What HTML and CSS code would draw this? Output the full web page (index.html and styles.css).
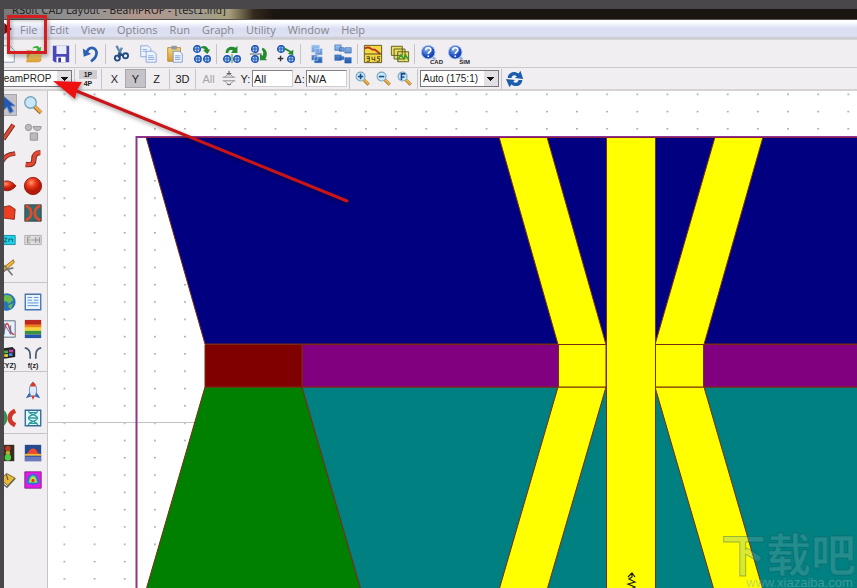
FILE: index.html
```html
<!DOCTYPE html>
<html lang="en">
<head>
<meta charset="utf-8">
<title>RSoft CAD Layout</title>
<link rel="stylesheet" href="styles.css">
</head>
<body>
<svg class="defs" aria-hidden="true">
  <defs>
    <linearGradient id="blue" x2="0" y2="1"><stop stop-color="#9cc4f0"/><stop offset="1" stop-color="#1f58ae"/></linearGradient>
    <linearGradient id="gold" x2="0" y2="1"><stop stop-color="#f6d878"/><stop offset="1" stop-color="#d89a2c"/></linearGradient>
    <radialGradient id="ball" cx=".4" cy=".3"><stop stop-color="#ff9a70"/><stop offset=".5" stop-color="#ee3a1c"/><stop offset="1" stop-color="#b81808"/></radialGradient>
    <radialGradient id="help" cx=".4" cy=".3"><stop stop-color="#8ab4f4"/><stop offset="1" stop-color="#1a48b8"/></radialGradient>
    <symbol id="node" viewBox="0 0 10 10"><circle cx="5" cy="5" r="4" fill="#b8d4f4" stroke="#1c56b4" stroke-width="1.8"/><path d="M5 1v8M1 5h8" stroke="#1c56b4" stroke-width="1.3"/></symbol>
    <symbol id="lens" viewBox="0 0 22 22"><path d="M12 12l7 7" stroke="#9a6a28" stroke-width="4"/><path d="M12.500 12l6.500 6.500" stroke="#f0b048" stroke-width="2.500"/><circle cx="8.500" cy="8.500" r="5.800" fill="#c8e8fa" stroke="#7aa4bc" stroke-width="1.400"/></symbol>
    <symbol id="qmark" viewBox="0 0 22 22"><circle cx="9" cy="9" r="7.500" fill="url(#help)" stroke="#b4c8ec"/><path d="M6.300 7c0-4 5.600-3.600 5.600-.3 0 2-2.800 2-2.800 4.300M9.100 12.600v1.700" fill="none" stroke="#fff" stroke-width="1.800"/><path d="M14 15l3 2" stroke="#9ab0d8" stroke-width="3"/></symbol>
  </defs>
</svg>

<div class="window">
  <header class="titlebar"><span class="caption">RSoft CAD Layout - BeamPROP - [test1.ind]</span></header>

  <nav class="menubar">
    <svg class="doc-mark" viewBox="0 0 10 14"><path d="M0 0l9 7-9 6z" fill="#751010"/></svg>
    <a href="#">File</a><a href="#">Edit</a><a href="#">View</a><a href="#">Options</a><a href="#">Run</a><a href="#">Graph</a><a href="#">Utility</a><a href="#">Window</a><a href="#">Help</a>
  </nav>

  <div class="toolbar main-tools">
    <button aria-label="New"><svg viewBox="0 0 22 22"><path d="M3 2h11l5 5v13H3z" fill="#fff" stroke="#8494b4"/></svg></button>
    <button aria-label="Open"><svg viewBox="0 0 22 22"><path d="M3 7h6l2 2h8v10H3z" fill="#d6a344"/><path d="M7 11h13l-3 9H2z" fill="url(#gold)"/><path d="M9 5c3-4 7-3 8-1l2-1-1 6-5-2 2-1c-1-2-3-2-6-1z" fill="#3fae38"/></svg></button>
    <button aria-label="Save"><svg viewBox="0 0 22 22"><path d="M2 2h18v18H4l-2-2z" fill="#4a48b8"/><path d="M6 2h11v9H6z" fill="#e8ecfa"/><path d="M6 14h10v6H6z" fill="#fff"/><path d="M8 15h3v5H8z" fill="#3836a0"/></svg></button>
    <i class="sep"></i>
    <button aria-label="Undo"><svg viewBox="0 0 22 22"><path d="M6 10C9 1 18 4 17 11c-.5 4-3 6-6 8" fill="none" stroke="#2c60b4" stroke-width="3"/><path d="M2 5l1 9 8-3z" fill="#2c60b4"/></svg></button>
    <i class="sep"></i>
    <button aria-label="Cut"><svg viewBox="0 0 22 22"><path d="M6 2l6 11M12 4L8 13" stroke="#5a86ac" stroke-width="2.500"/><circle cx="7" cy="15.500" r="2.800" fill="none" stroke="#204a80" stroke-width="2"/><circle cx="16" cy="13" r="2.800" fill="none" stroke="#204a80" stroke-width="2"/><path d="M8 10l6 3M11 12l-3 3" stroke="#204a80" stroke-width="2"/></svg></button>
    <button aria-label="Copy"><svg viewBox="0 0 22 22"><g fill="#eef4fe" stroke="#86a2d6"><path d="M3 2h8l3 3v9H3z"/><path d="M9 8h8l3 3v9H9z"/></g><path d="M5 6h5M5 8h4M11 13h6M11 15h7M11 17h7" stroke="#86a8de"/></svg></button>
    <button aria-label="Paste"><svg viewBox="0 0 22 22"><path d="M3 4h14v15H3z" fill="url(#gold)" stroke="#b98935"/><path d="M7 2h6v4H7z" fill="#8a98a8"/><path d="M9 8h7l3 3v9H9z" fill="#f2f7ff" stroke="#7997cd"/><path d="M11 13h6M11 15h6M11 17h6" stroke="#7d9ed6"/></svg></button>
    <button aria-label="Duplicate"><svg viewBox="0 0 22 22"><use href="#node" x="1" y="1" width="9" height="9"/><use href="#node" x="2" y="12" width="9" height="9"/><use href="#node" x="12" y="12" width="9" height="9"/><path d="M10 3c4-2 7 0 8 3h2l-3 5-5-4h2c0-2-2-3-4-2z" fill="#258b30"/></svg></button>
    <i class="sep"></i>
    <button aria-label="Rotate"><svg viewBox="0 0 22 22"><use href="#node" x="1" y="12" width="9" height="9"/><use href="#node" x="12" y="12" width="9" height="9"/><path d="M4 10c0-7 7-8 11-6l2-2v8h-7l2-3c-3-1-5 0-5 3z" fill="#258b30"/><path d="M11 11v10" stroke="#258b30"/></svg></button>
    <button aria-label="Flip"><svg viewBox="0 0 22 22"><use href="#node" x="2" y="1" width="9" height="9"/><use href="#node" x="2" y="12" width="9" height="9"/><path d="M1 11h13" stroke="#555"/><path d="M15 4c5 2 6 8 3 12l2 2h-8v-7l3 2c1-3 1-5-1-7z" fill="#258b30"/></svg></button>
    <button aria-label="Move copy"><svg viewBox="0 0 22 22"><use href="#node" x="1" y="1" width="9" height="9"/><use href="#node" x="12" y="12" width="9" height="9"/><path d="M10 4l7 4 2-2v6l-6-1 2-2-6-3z" fill="#258b30"/><path d="M5 13v6M2 16h6" stroke="#333" stroke-width="1.500"/></svg></button>
    <i class="sep"></i>
    <button aria-label="Arrange"><svg viewBox="0 0 22 22"><g fill="url(#blue)" stroke="#c8dcf4" stroke-width=".6"><path d="M10 5h8v7h-8zM6 1h9v8H6zM6 12h7v6H6zM9 14h9v7H9z"/></g></svg></button>
    <button aria-label="Group"><svg viewBox="0 0 22 22"><g fill="url(#blue)" stroke="#1d56aa" stroke-width=".6"><path d="M2 1h7v6H2zM7 4h5v4H7zM13 4h7v6h-7zM2 12h7v6H2zM8 14h4v3H8zM13 15h7v6h-7z"/></g></svg></button>
    <i class="sep"></i>
    <button aria-label="Symbol table"><svg viewBox="0 0 22 22"><path d="M1.500 1.500h19v19h-19z" fill="#f4d940" stroke="#5b5020"/><path d="M2 5c6-4 7 3 11 1l6 5" fill="none" stroke="#b43426" stroke-width="2"/><path d="M2 11h18M4 14h3v5H4M4 16h3M10 14v3h3M13 14v5M19 14h-3v2h2v3h-3" fill="none" stroke="#4a4020"/></svg></button>
    <button aria-label="Layers"><svg viewBox="0 0 22 22"><g fill="#eadd62" stroke="#58581e"><path d="M1.500 2.500h12v10h-12zM4.500 5.500h12v11h-12zM8.500 8.500h12v11h-12z"/></g><path d="M9 17l3-5 3 4 2-4 3 5" fill="none" stroke="#2a9c2e" stroke-width="1.500"/></svg></button>
    <i class="sep"></i>
    <button class="help" aria-label="CAD help"><svg viewBox="0 0 22 22"><use href="#qmark"/></svg><small>CAD</small></button>
    <button class="help" aria-label="Simulation help"><svg viewBox="0 0 22 22"><use href="#qmark"/></svg><small>SIM</small></button>
  </div>

  <div class="toolbar view-tools">
    <select class="combo engine" aria-label="Simulation tool"><option>BeamPROP</option></select>
    <i class="sep"></i>
    <button class="panes" aria-label="Panes"><b>1P</b><b>4P</b></button>
    <i class="sep"></i>
    <button class="axis">X</button><button class="axis pressed">Y</button><button class="axis">Z</button>
    <i class="sep"></i>
    <button class="axis">3D</button>
    <i class="sep"></i>
    <button class="axis off">All</button>
    <button class="spin" aria-label="Step slice"><svg viewBox="0 0 18 20"><path d="M2 8h14M2 12h14" stroke="#888"/><path d="M9 1v5M6.500 4h5M7 16h4" stroke="#333"/><path d="M4 8l5-4 5 4M4 12l5 5 5-5" fill="none" stroke="#888"/></svg></button>
    <label for="slice">Y:</label><input id="slice" value="All">
    <label for="delta">Δ:</label><input id="delta" value="N/A">
    <i class="sep"></i>
    <button class="zoom" aria-label="Zoom in"><svg viewBox="0 0 22 22"><use href="#lens"/><path d="M5 8.500h7M8.500 5v7" stroke="#164a8c" stroke-width="2"/></svg></button>
    <button class="zoom" aria-label="Zoom out"><svg viewBox="0 0 22 22"><use href="#lens"/><path d="M5 8.500h7" stroke="#164a8c" stroke-width="2"/></svg></button>
    <button class="zoom" aria-label="Zoom full"><svg viewBox="0 0 22 22"><use href="#lens"/><path d="M7 13V5h5M7 9h4" fill="none" stroke="#164a8c" stroke-width="2"/></svg></button>
    <i class="sep"></i>
    <select class="combo scale" aria-label="Aspect ratio"><option>Auto (175:1)</option></select>
    <i class="sep"></i>
    <button class="refresh" aria-label="Refresh"><svg viewBox="0 0 22 22"><path d="M3 10c0-6 7-9 12-5l2-3 3 9-9-1 2-2c-3-2-5-1-6 2zM19 12c0 6-7 9-12 5l-2 3-4-9 10 1-2 2c3 2 5 1 6-2z" fill="#1b5daa"/></svg></button>
  </div>

  <main class="workspace">
    <aside class="palette">
      <div class="tools">
        <button class="pressed" aria-label="Select"><svg viewBox="0 0 22 22"><path d="M7 1v16l4-4 3 7 4-2-3-6h5z" fill="#2458b0" stroke="#5f88c4"/></svg></button>
        <button aria-label="Zoom"><svg viewBox="0 0 22 22"><use href="#lens" x="-1" y="-1" width="24" height="24"/></svg></button>
        <button aria-label="Straight segment"><svg viewBox="0 0 22 22"><path d="M7 19L18 3" stroke="#74281c" stroke-width="5"/><path d="M7 19L18 3" stroke="#e04a34" stroke-width="3"/></svg></button>
        <button aria-label="Components"><svg viewBox="0 0 22 22"><g fill="#bbb" stroke="#929292"><circle cx="6" cy="6" r="3.500"/><path d="M11 5h9c0 6-8 6-9 0zM8 12h8v8H8z"/></g></svg></button>
        <button aria-label="Arc segment"><svg viewBox="0 0 22 22"><path d="M5 15C8 8 12 6 20 5" fill="none" stroke="#79342c" stroke-width="5"/><path d="M5 15C8 8 12 6 20 5" fill="none" stroke="#df4634" stroke-width="3"/></svg></button>
        <button aria-label="S-bend"><svg viewBox="0 0 22 22"><path d="M3 17c8 1 9-2 9-6s2-7 7-7" fill="none" stroke="#75291c" stroke-width="6"/><path d="M3 17c8 1 9-2 9-6s2-7 7-7" fill="none" stroke="#e34631" stroke-width="4"/></svg></button>
        <button aria-label="Lens"><svg viewBox="0 0 22 22"><path d="M2 11c5-8 13-7 19 0-6 7-14 7-19 0z" fill="url(#ball)" stroke="#8c2014"/></svg></button>
        <button aria-label="Circle"><svg viewBox="0 0 22 22"><circle cx="11" cy="11" r="9.500" fill="url(#ball)" stroke="#8c2014"/></svg></button>
        <button aria-label="Polygon"><svg viewBox="0 0 22 22"><path d="M3 5l11-2 6 4-1 11-16-2z" fill="#ec3e20" stroke="#8c2014"/></svg></button>
        <button aria-label="Coupler"><svg viewBox="0 0 22 22"><path d="M2 2h18v18H2z" fill="#2a6e70" stroke="#44383c"/><path d="M3 3c8 3 8 13 0 16M19 3c-8 3-8 13 0 16" fill="none" stroke="#e9482c" stroke-width="3"/></svg></button>
        <button aria-label="Impedance"><svg viewBox="0 0 22 22"><path d="M2 6h18v10H2z" fill="#20cfe4" stroke="#148ba4"/><path d="M8 9h3l-3 4h3M13 13v-3h4v3" fill="none" stroke="#165970"/></svg></button>
        <button aria-label="Fields"><svg viewBox="0 0 22 22"><path d="M2 6h18v10H2z" fill="#ddd" stroke="#aaa"/><path d="M8 8H5v6h3M5 11h3M9 11h5M14 8v6M18 8v6M14 11h4" fill="none" stroke="#999" stroke-width="1.300"/></svg></button>
        <button aria-label="Edit tools"><svg viewBox="0 0 22 22"><path d="M4 14L18 3l1 3L7 17z" fill="#f0b637" stroke="#98691c"/><path d="M8 9l9 11M6 15l12-3" stroke="#777" stroke-width="1.800"/></svg></button>
      </div>
      <div class="tools">
        <button aria-label="Global settings"><svg viewBox="0 0 22 22"><circle cx="11" cy="11" r="9.500" fill="#2774bd"/><path d="M9 3l6 1 3 5-5 4-3-3-5 1zM12 15l6-3-3 7z" fill="#6cbd48"/></svg></button>
        <button aria-label="Symbols"><svg viewBox="0 0 22 22"><path d="M2.500 2.500h17v17h-17z" fill="#eaf4ff" stroke="#4a74ad" stroke-width="1.500"/><path d="M5 6h5M12 6h5M5 9h5M12 9h5M5 12h12M5 15h12" stroke="#4b8dd4"/></svg></button>
        <button aria-label="Index profile"><svg viewBox="0 0 22 22"><path d="M2 2h18v18H2z" fill="#e7f0fb" stroke="#567"/><path d="M4 18c5 0 4-13 7-13s2 12 8 12" fill="none" stroke="#d84032" stroke-width="1.800"/><path d="M8 17V5l7 12V7" fill="none" stroke="#406bb9"/></svg></button>
        <button aria-label="Layer table"><svg viewBox="0 0 22 22"><path d="M2 1h18v6H2z" fill="#bb281f"/><path d="M2 6h18v4H2z" fill="#ee7c20"/><path d="M2 9h18v4H2z" fill="#f3d33c"/><path d="M2 13h18v4H2z" fill="#38943c"/><path d="M2 17h18v4H2z" fill="#2453a8"/></svg></button>
        <button aria-label="Material"><svg viewBox="0 0 22 22"><path d="M5 3l12-2 3 3v8L8 14z" fill="#222"/><path d="M8 5h4v3H8z" fill="#50bd42"/><path d="M13 4h5v3h-5z" fill="#c63ab4"/><path d="M13 8h4v3h-4z" fill="#3b8ce2"/><path d="M8 9h4v3H8z" fill="#edcf36"/></svg><small>(XYZ)</small></button>
        <button aria-label="Taper"><svg viewBox="0 0 22 22"><path d="M2 2c6 1 6 6 6 12M20 2c-6 1-6 6-6 12" fill="none" stroke="#465673" stroke-width="1.800"/></svg><small>f(z)</small></button>
      </div>
      <div class="tools">
        <span></span>
        <button aria-label="Launch"><svg viewBox="0 0 22 22"><path d="M8 11l-5 8 6-2zM14 11l5 8-6-2z" fill="#3569b8"/><path d="M11 1c6 6 4 12 2 16H9C7 13 5 7 11 1z" fill="#dceafa" stroke="#668bbb"/><path d="M11 1c3 2 3 5 3 5H8s0-3 3-5zM9 16h4l-2 5z" fill="#dc3b22"/></svg></button>
        <button aria-label="Pathways"><svg viewBox="0 0 22 22"><path d="M5 3c6 4 6 12 0 16" fill="none" stroke="#329352" stroke-width="4"/><path d="M20 3c-8 4-8 12 0 16" fill="none" stroke="#cf3528" stroke-width="5"/></svg></button>
        <button aria-label="Monitors"><svg viewBox="0 0 22 22"><path d="M2.500 2.500h17v17h-17z" fill="#e6f7fb" stroke="#35699b" stroke-width="1.500"/><path d="M6 3c0 5 10 4 10 8s-10 3-10 8M16 3c0 5-10 4-10 8s10 3 10 8M7 5h8M7 11h8M7 17h8" fill="none" stroke="#2c9b9b" stroke-width="1.400"/></svg></button>
      </div>
      <div class="tools">
        <button aria-label="Run simulation"><svg viewBox="0 0 22 22"><path d="M3 2h16v18H3z" fill="#362e20"/><circle cx="12" cy="6" r="3" fill="#c33821"/><circle cx="12" cy="11" r="2.500" fill="#bdab31"/><circle cx="12" cy="16" r="3.500" fill="#4bcf45"/></svg></button>
        <button aria-label="Mode profile"><svg viewBox="0 0 22 22"><path d="M2 2h18v18H2z" fill="#27498f"/><path d="M2 15h18v5H2z" fill="#6b78bb"/><path d="M3 12c4 0 3-6 8-6s4 6 8 6z" fill="#ef492c"/><path d="M2 12h18v2H2z" fill="#ecba41"/></svg></button>
        <button aria-label="Scan"><svg viewBox="0 0 22 22"><path d="M3 10l8-6 9 5-8 8z" fill="#e8b934" stroke="#76602a"/><path d="M5 14l6 5 9-10M10 4l2 7" fill="none" stroke="#68635c" stroke-width="1.500"/></svg></button>
        <button aria-label="Contour"><svg viewBox="0 0 22 22"><path d="M2 2h18v18H2z" fill="#e916e8" stroke="#7f2687"/><path d="M4 14C5 5 9 4 11 4s6 1 7 10c-3 3-11 3-14 0z" fill="#326be0"/><path d="M6 14c1-6 3-8 5-8s4 2 5 8z" fill="#5be05d"/><path d="M8 13c0-4 2-5 3-5s3 1 3 5z" fill="#f1e332"/><circle cx="11" cy="11.500" r="1.800" fill="#dc3822"/></svg></button>
      </div>
    </aside>

    <svg class="canvas" viewBox="48 91 809 497" preserveAspectRatio="xMinYMin slice">
      <defs><pattern id="grid" x="63.500" y="93.500" width="30.150" height="17.310" patternUnits="userSpaceOnUse"><path d="M0 0h1.800v1.400H0z" fill="#a0a0a0"/></pattern></defs>
      <path d="M48 91h809v497H48z" fill="#fff"/>
      <path d="M48 91h809v497H48z" fill="url(#grid)"/>
      <path d="M48 422.500h150" stroke="#c2c2c2"/>
      <g stroke="#7a2b10" stroke-width="1">
        <path d="M146 137H860V344H205z" fill="#000080"/>
        <path d="M205 387H302L361 590H146z" fill="#008000"/>
        <path d="M302 387H860V590H361z" fill="#008080"/>
        <path d="M302 344.500H860V387H302z" fill="#800080"/>
        <path d="M205 344.500H302V387H205z" fill="#800000"/>
        <g fill="#ff0">
          <path d="M499 137H547L606 344.500H558z"/>
          <path d="M715 137H763L704 344.500H655z"/>
          <path d="M558 387H606L547 590H499z"/>
          <path d="M655 387H704L763 590H714z"/>
          <path d="M558.500 344.500H606V387H558.500zM655.500 344.500H703.500V387H655.500z"/>
          <path d="M606.500 137H655.500V592H606.500z"/>
        </g>
      </g>
      <path d="M136.500 590V137H860" fill="none" stroke="#8d3590" stroke-width="2"/>
      <path d="M146 137.500H860" stroke="#85204a"/>
      <path d="M628 577l4-4 3 4M632 574v3l-3 2 6 3-7 2 7 3-6 3" fill="none" stroke="#1c1c00" stroke-width="1.200"/>
      <g class="watermark">
        <text x="721" y="572" font-size="45">下载吧</text>
        <text class="site" x="746" y="587" font-size="13">www.xiazaiba.com</text>
      </g>
    </svg>
  </main>

  <svg class="callout" viewBox="0 0 380 230" aria-hidden="true">
    <path d="M8.500 16.500h37v36h-37z" fill="none" stroke="#d61d1f" stroke-width="3"/>
    <path d="M347 201L74 90" stroke="#c9151a" stroke-width="3" stroke-linecap="round"/>
    <path d="M53 81l29 1-5 8-2 9z" fill="#ee1111"/>
  </svg>
</div>
</body>
</html>
```

FILE: styles.css
```css
* { box-sizing: border-box; }

body {
  margin: 0;
  padding: 9px 0 0 4px;
  background: #4a474a;
  font: 11px "Liberation Sans", sans-serif;
  color: #222;
  overflow: hidden;
}

.defs { position: absolute; width: 0; height: 0; }

.window { overflow: hidden; background: #f0eef1; }

.titlebar {
  display: flex;
  align-items: center;
  height: 11px;
  overflow: hidden;
  background: linear-gradient(90deg, #777a78, #8e8f90 60px, #9c9691 100px, #b4978c 140px, #a09c92 190px, #a8a07c 225px, #33291c 250px, #1b1511 270px);
  border-bottom: 1px solid #55504e;
}
.caption {
  padding-left: 8px;
  font: 11px/12px "DejaVu Sans Condensed", "Open Sans", sans-serif;
  margin-top: -6px;
  white-space: nowrap;
}

.menubar {
  display: flex;
  align-items: center;
  gap: 12px;
  height: 20px;
  padding-bottom: 2px;
  background: linear-gradient(#fff 2px, #eceefa 5px, #d9def0 9px, #dfe1f2 16px, #c9c9cf 18px, #d8d7da);
  font: 11px "Open Sans", sans-serif;
}
.menubar a { color: #85868e; text-decoration: none; }
.doc-mark { width: 9px; height: 12px; margin-right: -5px; }

button {
  display: flex;
  align-items: center;
  justify-content: center;
  flex: none;
  padding: 0;
  border: 0;
  background: none;
  font: inherit;
  color: inherit;
}

.toolbar { display: flex; align-items: center; }
.sep { flex: none; width: 1px; height: 20px; margin: 0 1px; background: #c6c4c8; }

.main-tools {
  height: 28px;
  margin-left: -11px;
  border-bottom: 1px solid #cbc9cc;
}
.main-tools button { width: 27px; height: 27px; position: relative; }
.main-tools svg { width: 20px; height: 20px; }
.main-tools small {
  position: absolute;
  right: 0;
  bottom: 2px;
  font: bold 6px "Liberation Sans", sans-serif;
}

.view-tools {
  height: 23px;
  border-bottom: 2px solid #d6d4d2;
}
.view-tools .sep { margin: 0 2px; }

.combo {
  --arrow: 6px;
  appearance: none;
  flex: none;
  height: 17px;
  border: 1px solid #77777b;
  border-radius: 0;
  padding: 0 2px;
  color: #222;
  background:
    linear-gradient(#111, #111) right var(--arrow) top 6px / 7px 1px no-repeat,
    linear-gradient(#111, #111) right calc(var(--arrow) + 1px) top 7px / 5px 1px no-repeat,
    linear-gradient(#111, #111) right calc(var(--arrow) + 2px) top 8px / 3px 1px no-repeat,
    linear-gradient(#111, #111) right calc(var(--arrow) + 3px) top 9px / 1px 1px no-repeat,
    linear-gradient(#e2e0e4, #e2e0e4) right / 14px 100% no-repeat,
    #fff;
}
.engine { --arrow: 3px; width: 78px; margin-left: -10px; font: 10px "Liberation Sans", sans-serif; }
.scale { --arrow: 4px; width: 79px; font: 10px "Liberation Sans", sans-serif; }

.panes { flex-direction: column; width: 22px; font-size: 7px; line-height: 9px; }
.panes b { width: 18px; }
.panes b:first-child { background: #cfcdd1; }

.axis { width: 21px; height: 19px; }
.axis.off { color: #a4a3a7; }
.pressed { background: #c5c3c8; outline: 1px solid #a9a7ad; outline-offset: -1px; }

.spin { width: 20px; }
.spin svg { width: 18px; height: 18px; }

.toolbar label { width: 13px; text-align: center; }
.toolbar input {
  width: 41px;
  height: 17px;
  padding: 0 1px;
  border: 1px solid #d0ced2;
  border-top-color: #838287;
  border-left-color: #838287;
  background: #fff;
  color: #222;
  font: inherit;
}

.zoom { width: 21px; }
.zoom svg { width: 17px; height: 17px; }
.refresh { width: 22px; }
.refresh svg { width: 20px; height: 20px; }

.workspace { display: grid; grid-template-columns: 44px minmax(0, 1fr); }

.palette { overflow: hidden; border-right: 1px solid #c6c4c6; }
.tools {
  display: grid;
  grid-template-columns: 26px 26px;
  grid-auto-rows: 27px;
  margin-left: -10px;
}
.tools + .tools {
  margin-top: 2px;
  padding-top: 5px;
  border-top: 1px solid #c6c4c6;
}
.tools button { position: relative; }
.tools button.pressed { margin: 3px 3px 2px; }
.tools svg { width: 20px; height: 20px; }
.tools small { position: absolute; bottom: 0; font: bold 7px "Liberation Sans", sans-serif; }

.canvas { display: block; width: 100%; }

.watermark {
  font-family: "Noto Sans CJK SC", sans-serif;
  font-weight: 700;
  fill: #7fb0b0;
  fill-opacity: .28;
  stroke: #0b5560;
  stroke-opacity: .4;
}
.site { font-family: "Liberation Sans", sans-serif; font-weight: 400; fill-opacity: .5; stroke: none; }

.callout {
  position: absolute;
  top: 0;
  left: 0;
  width: 380px;
  height: 230px;
  pointer-events: none;
  filter: drop-shadow(1px 2px 2px rgba(0, 0, 0, .4));
}
```
